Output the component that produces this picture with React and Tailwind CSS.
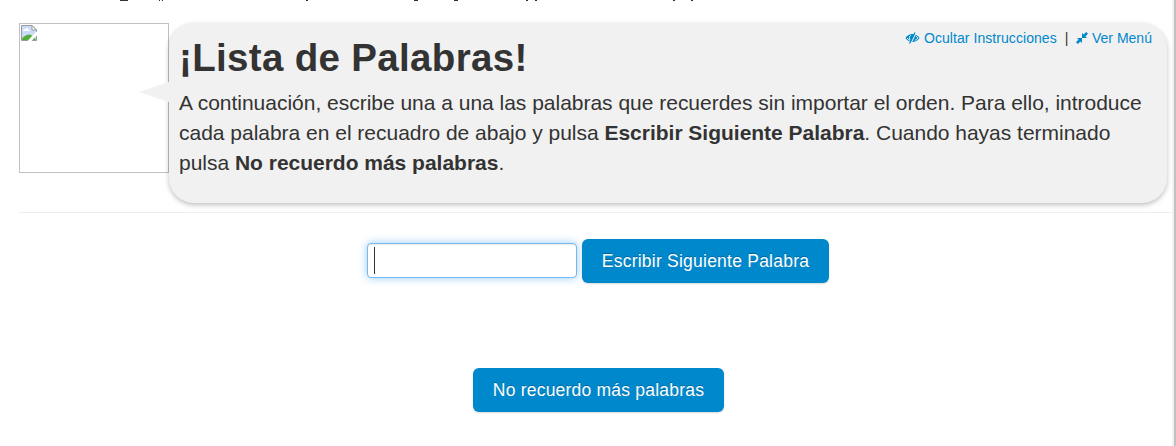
const marks = [[120, 8], [159, 1], [162, 1], [306, 2], [414, 4], [454, 4], [526, 2], [535, 2], [673, 2], [691, 2]];

function BrokenImage() {
  return (
    <svg width="16" height="16" viewBox="0 0 16 16">
      <path d="M.5 .5H11L15.5 5V15.5H.5Z" fill="#c9dbf8" stroke="#9b9b9b" />
      <path d="M11 .5V5H15.5Z" fill="#fff" stroke="#9b9b9b" />
      <path d="M2 6C2 4 4 4 4.5 4C5 2.5 7.5 3 7.5 4.5C9 4.5 9 6 8 6Z" fill="#fff" />
      <path d="M1 15V13.5C4 10.5 6 9.5 8 9.5C11 9.5 13 12 15 15Z" fill="#54ad3b" />
      <path d="M8 16.5L16.5 7.5" stroke="#fff" strokeWidth="3" />
    </svg>
  );
}

function EyeSlash() {
  return (
    <svg className="mr-1" width="15" height="12" viewBox="0 0 15 12">
      <path d="M.5 6C3.8 .8 11.2 .8 14.5 6C11.2 11.2 3.8 11.2 .5 6Z" fill="#0088cc" />
      <path d="M5.7 3.3C4 4.3 4 6.8 5.2 8.2M2.2 6C2.8 7.2 3.7 8 4.6 8.5M9.8 8.4C11.2 8 12.2 7 12.8 6C12.2 5 11.5 4.2 10.8 3.8" fill="none" stroke="#f1f1f1" strokeWidth="1" />
      <path d="M11.2 .5L5.8 11.5" stroke="#f1f1f1" strokeWidth="1.2" />
      <path d="M10 .5L4.6 11.5" stroke="#0088cc" strokeWidth="1.2" />
    </svg>
  );
}

function Compress() {
  return (
    <svg width="12" height="12" viewBox="0 0 12 12" fill="#0088cc">
      <path d="M6 1V6H11L9.4 4.4L12 1.8L10.2 0L7.6 2.6ZM1 6H6V11L4.4 9.4L1.8 12L0 10.2L2.6 7.6Z" />
    </svg>
  );
}

function Button({ children, className }) {
  return (
    <button className={`h-11 rounded-[6px] bg-[#0088cc] text-[17.5px] text-white whitespace-nowrap shadow-[0_1px_2px_rgba(0,0,0,0.15)] [text-shadow:0_-1px_0_rgba(0,0,0,0.25)] ${className}`}>
      {children}
    </button>
  );
}

export default function App() {
  return (
    <div className="flex h-[446px] w-full overflow-hidden bg-white font-['Liberation_Sans',Arial,sans-serif] text-[#333]">
      <main className="flex w-[1172px] flex-col">
        <svg className="block h-[23px] w-full shrink-0" shapeRendering="crispEdges">
          {marks.map(([x, w]) => <rect key={x} x={x} y="0" width={w} height="1" fill="#333" />)}
        </svg>
        <section className="ml-[19px] flex h-[190px] shrink-0 border-b border-[#eee]">
          <div className="h-[150px] w-[150px] shrink-0 border border-[#c0c0c0] p-px">
            <BrokenImage />
          </div>
          <div className="relative h-[180px] w-[998px] rounded-[25px] bg-[#f1f1f1] pl-2.5 shadow-[0_2px_5px_rgba(0,0,0,0.25)]">
            <svg className="absolute top-[58px] -left-[30px]" width="31" height="22"><path d="M0 11L30 1H31V21H30Z" fill="#f1f1f1" /></svg>
            <div className="absolute top-[5px] right-[15px] flex h-5 items-center text-[14px] text-[#0088cc]">
              <EyeSlash />
              <a className="w-[133px] tracking-[0.06px] whitespace-nowrap">Ocultar Instrucciones</a>
              <span className="w-[19px] text-center text-[#333]">|</span>
              <Compress />
              <a className="ml-1 w-[60px] whitespace-nowrap">Ver Menú</a>
            </div>
            <h1 className="pt-[15px] text-[38.5px] leading-10 font-bold tracking-[0.33px]">¡Lista de Palabras!</h1>
            <p className="pt-[10px] text-[21px] leading-[30px] tracking-[-0.015px] whitespace-nowrap">
              A continuación, escribe una a una las palabras que recuerdes sin importar el orden. Para ello, introduce<br />
              cada palabra en el recuadro de abajo y pulsa <b>Escribir Siguiente Palabra</b>. Cuando hayas terminado<br />
              pulsa <b>No recuerdo más palabras</b>.
            </p>
          </div>
        </section>
        <div className="flex items-start pt-[26px] pl-[367px]">
          <div className="mt-1 mr-[5px] h-[35px] w-[210px] rounded-[4px] border border-[#75b9f0] bg-white pt-[3px] pl-[6px] shadow-[inset_0_1px_1px_rgba(0,0,0,0.075),0_0_8px_rgba(82,168,236,0.6)]">
            <div className="h-[27px] w-px bg-[#333]" />
          </div>
          <Button className="w-[247px] tracking-[0.23px]">Escribir Siguiente Palabra</Button>
        </div>
        <div className="pt-[85px] pl-[473px]">
          <Button className="w-[251px] tracking-[0.21px]">No recuerdo más palabras</Button>
        </div>
      </main>
      <div className="w-0.5 bg-[#f1f1f1]" />
      <div className="w-0.5 bg-[#c1c1c1]" />
    </div>
  );
}
